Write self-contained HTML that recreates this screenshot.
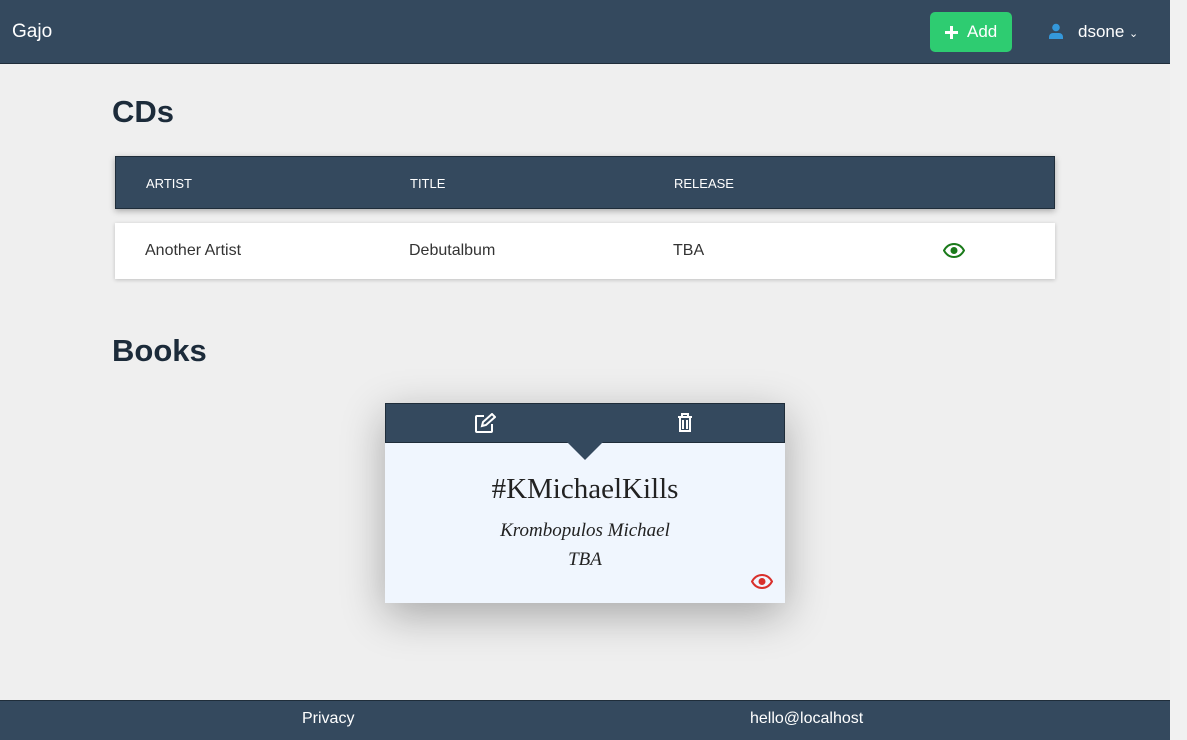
<!DOCTYPE html>
<html><head><style>
*{box-sizing:border-box;margin:0;padding:0}
body{width:1187px;height:740px;background:#efefef;font-family:"Liberation Sans",sans-serif;position:relative;overflow:hidden}
.sb{position:absolute;right:0;top:0;width:17px;height:740px;background:#f1f1f1}
.nav{position:absolute;left:0;top:0;width:1170px;height:64px;background:#34495e;border-bottom:1px solid #1f2d3a;color:#fff}
.brand{position:absolute;left:12px;top:21px;font-size:19px}
.add{position:absolute;left:930px;top:12px;width:82px;height:40px;background:#2ecc71;border-radius:5px;color:#fff;font-size:17px;line-height:40px;padding-left:37px}
.add:before{content:"";position:absolute;left:15px;top:19px;width:13px;height:3px;background:#fff}
.add:after{content:"";position:absolute;left:20px;top:14px;width:3px;height:13px;background:#fff}
.user{position:absolute;left:1048px;top:22px;font-size:17px}
h1{position:absolute;left:112px;font-size:31px;color:#1c2b3a;font-weight:bold}
.th{position:absolute;left:115px;top:156px;width:940px;height:53px;background:#34495e;border:1px solid #1f2d3a;box-shadow:0 2px 6px rgba(0,0,0,.3);color:#fff;font-size:13px}
.tr{position:absolute;left:115px;top:223px;width:940px;height:56px;background:#fff;box-shadow:0 1px 4px rgba(0,0,0,.2);color:#333;font-size:16px}
.c{position:absolute}
.card{position:absolute;left:385px;top:403px;width:400px;height:200px;background:#f0f6fe;box-shadow:0 12px 40px rgba(0,0,0,.3)}
.ch{height:40px;background:#34495e;border:1px solid #1f2d3a;position:relative}
.tri{position:absolute;left:182px;top:39px;width:0;height:0;border-left:18px solid transparent;border-right:18px solid transparent;border-top:18px solid #34495e}
.serif{font-family:"Liberation Serif",serif;color:#222;text-align:center;position:absolute;width:400px;left:0}
.foot{position:absolute;left:0;top:700px;width:1170px;height:40px;background:#34495e;border-top:1px solid #1f2d3a;color:#fff;font-size:16px}
</style></head><body>
<div class="sb"></div>
<div class="nav"><div class="brand">Gajo</div>
<div class="add">Add</div>
<div class="user"><svg width="16" height="16" viewBox="0 0 16 16" style="vertical-align:-2px;margin-right:14px"><circle cx="8" cy="4.5" r="3.8" fill="#3498db"/><path d="M1 16v-2a4 4 0 0 1 4-4h6a4 4 0 0 1 4 4v2z" fill="#3498db"/></svg>dsone <span style="font-size:11px">&#8964;</span></div></div>
<h1 style="top:94px">CDs</h1>
<div class="th"><span class="c" style="left:30px;top:19px">ARTIST</span><span class="c" style="left:294px;top:19px">TITLE</span><span class="c" style="left:558px;top:19px">RELEASE</span></div>
<div class="tr"><span class="c" style="left:30px;top:19px">Another Artist</span><span class="c" style="left:294px;top:19px">Debutalbum</span><span class="c" style="left:558px;top:19px">TBA</span>
<svg class="c" style="left:828px;top:20px" width="22" height="15" viewBox="0 0 22 15"><path d="M1 7.5C4 2 8 1 11 1s7 1 10 6.5C18 13 14 14 11 14S4 13 1 7.5z" fill="none" stroke="#1a7a1a" stroke-width="2"/><circle cx="11" cy="7.5" r="3.5" fill="#1a7a1a"/></svg></div>
<h1 style="top:333px">Books</h1>
<div class="card"><div class="ch">
<svg class="c" style="left:88px;top:9px" width="22" height="20" viewBox="0 0 22 20"><path d="M10 3H3a1 1 0 0 0-1 1v14a1 1 0 0 0 1 1h14a1 1 0 0 0 1-1v-7" fill="none" stroke="#fff" stroke-width="2"/><path d="M8 13l1-4 9-8 3 3-9 8z" fill="none" stroke="#fff" stroke-width="2"/></svg>
<svg class="c" style="left:291px;top:9px" width="16" height="20" viewBox="0 0 16 20"><path d="M1 4h14M5 4V1h6v3M3 4v14h10V4M6 7v9M10 7v9" fill="none" stroke="#fff" stroke-width="2"/></svg>
</div><div class="tri"></div>
<div class="serif" style="top:70px;font-size:29px">#KMichaelKills</div>
<div class="serif" style="top:117px;font-size:19px;font-style:italic">Krombopulos Michael</div>
<div class="serif" style="top:146px;font-size:19px;font-style:italic">TBA</div>
<svg class="c" style="left:366px;top:171px" width="22" height="15" viewBox="0 0 22 15"><path d="M1 7.5C4 2 8 1 11 1s7 1 10 6.5C18 13 14 14 11 14S4 13 1 7.5z" fill="none" stroke="#d9302c" stroke-width="2"/><circle cx="11" cy="7.5" r="3.5" fill="#d9302c"/></svg>
</div>
<div class="foot"><span class="c" style="left:302px;top:9px">Privacy</span><span class="c" style="left:750px;top:9px">hello@localhost</span></div>
</body></html>
